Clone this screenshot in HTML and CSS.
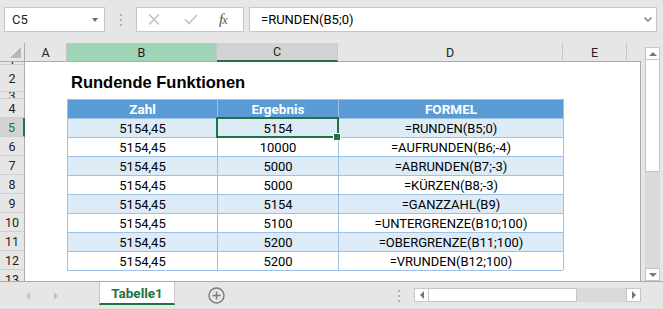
FILE: index.html
```html
<!DOCTYPE html>
<html lang="de">
<head>
    <meta charset="UTF-8">
    <meta name="viewport" content="width=device-width, initial-scale=1.0">
    <title>Rundende Funktionen</title>
    <link rel="stylesheet" href="styles.css">
</head>
<body>
    <div class="formula-bar">
        <div class="name-box">C5<span class="caret"></span></div>
        <div class="grip"><i></i><i></i><i></i></div>
        <div class="fx-buttons">
            <svg class="cancel" width="12" height="11" viewBox="0 0 12 11"><path d="M1 0.5 L11 10.5 M11 0.5 L1 10.5"/></svg>
            <svg class="enter" width="14" height="11" viewBox="0 0 14 11"><path d="M1 5.5 L5 9.5 L13 1"/></svg>
            <span class="fx">f<small>x</small></span>
        </div>
        <div class="formula-input">
            <span>=RUNDEN(B5;0)</span>
            <svg width="8" height="5" viewBox="0 0 8 5"><path d="M0.5 0.5 L4 4 L7.5 0.5"/></svg>
        </div>
    </div>

    <div class="sheet-area">
        <div class="sheet">
            <div class="row">
                <div class="corner"><span class="corner-tri"></span></div>
                <div class="ch">A</div>
                <div class="ch picked">B</div>
                <div class="ch active">C</div>
                <div class="ch">D</div>
                <div class="ch">E</div>
                <div class="ch blank"></div>
            </div>
            <div class="row">
                <div class="rh">1</div>
                <div class="c"></div><div class="c"></div><div class="c"></div><div class="c"></div><div class="c"></div>
                <div class="c edge"></div>
            </div>
            <div class="row">
                <div class="rh">2</div>
                <div class="c"></div>
                <div class="c title">Rundende Funktionen</div>
                <div class="c"></div><div class="c"></div><div class="c"></div>
                <div class="c edge"></div>
            </div>
            <div class="row">
                <div class="rh">3</div>
                <div class="c"></div><div class="c"></div><div class="c"></div><div class="c"></div><div class="c"></div>
                <div class="c edge"></div>
            </div>
            <div class="row thead">
                <div class="rh">4</div>
                <div class="c"></div>
                <div class="c t">Zahl</div>
                <div class="c t">Ergebnis</div>
                <div class="c t">FORMEL</div>
                <div class="c t-end"></div>
                <div class="c edge"></div>
            </div>
            <div class="row band">
                <div class="rh active">5</div>
                <div class="c"></div>
                <div class="c t">5154,45</div>
                <div class="c t selected">5154</div>
                <div class="c t">=RUNDEN(B5;0)</div>
                <div class="c t-end"></div>
                <div class="c edge"></div>
            </div>
            <div class="row">
                <div class="rh">6</div>
                <div class="c"></div>
                <div class="c t">5154,45</div>
                <div class="c t">10000</div>
                <div class="c t">=AUFRUNDEN(B6;-4)</div>
                <div class="c t-end"></div>
                <div class="c edge"></div>
            </div>
            <div class="row band">
                <div class="rh">7</div>
                <div class="c"></div>
                <div class="c t">5154,45</div>
                <div class="c t">5000</div>
                <div class="c t">=ABRUNDEN(B7;-3)</div>
                <div class="c t-end"></div>
                <div class="c edge"></div>
            </div>
            <div class="row">
                <div class="rh">8</div>
                <div class="c"></div>
                <div class="c t">5154,45</div>
                <div class="c t">5000</div>
                <div class="c t">=KÜRZEN(B8;-3)</div>
                <div class="c t-end"></div>
                <div class="c edge"></div>
            </div>
            <div class="row band">
                <div class="rh">9</div>
                <div class="c"></div>
                <div class="c t">5154,45</div>
                <div class="c t">5154</div>
                <div class="c t">=GANZZAHL(B9)</div>
                <div class="c t-end"></div>
                <div class="c edge"></div>
            </div>
            <div class="row">
                <div class="rh">10</div>
                <div class="c"></div>
                <div class="c t">5154,45</div>
                <div class="c t">5100</div>
                <div class="c t">=UNTERGRENZE(B10;100)</div>
                <div class="c t-end"></div>
                <div class="c edge"></div>
            </div>
            <div class="row band">
                <div class="rh">11</div>
                <div class="c"></div>
                <div class="c t">5154,45</div>
                <div class="c t">5200</div>
                <div class="c t">=OBERGRENZE(B11;100)</div>
                <div class="c t-end"></div>
                <div class="c edge"></div>
            </div>
            <div class="row">
                <div class="rh">12</div>
                <div class="c"></div>
                <div class="c t">5154,45</div>
                <div class="c t">5200</div>
                <div class="c t">=VRUNDEN(B12;100)</div>
                <div class="c t-end"></div>
                <div class="c edge"></div>
            </div>
            <div class="row">
                <div class="rh clipped">13</div>
                <div class="c"></div>
                <div class="c t-foot"></div><div class="c t-foot"></div><div class="c t-foot"></div>
                <div class="c"></div>
                <div class="c edge"></div>
            </div>
        </div>

        <div class="vscroll">
            <div class="sb-btn"><span class="tri up"></span></div>
            <div class="sb-thumb"></div>
            <div class="sb-track"></div>
            <div class="sb-btn"><span class="tri down"></span></div>
        </div>
    </div>

    <div class="tab-bar">
        <div class="tab-nav"><span class="tri left light"></span><span class="tri right light"></span></div>
        <div class="tab">Tabelle1</div>
        <svg class="add-sheet" width="17" height="17" viewBox="0 0 17 17">
            <circle cx="8.5" cy="8.5" r="7.5"/>
            <path d="M8.5 4.5 V12.5 M4.5 8.5 H12.5"/>
        </svg>
        <div class="grip tab-grip"><i></i><i></i><i></i></div>
        <div class="hscroll">
            <div class="sb-btn h"><span class="tri left"></span></div>
            <div class="sb-thumb h"></div>
            <div class="sb-track"></div>
            <div class="sb-btn h"><span class="tri right"></span></div>
        </div>
    </div>
</body>
</html>
```

FILE: styles.css
```css
* {
    margin: 0;
    padding: 0;
    box-sizing: border-box;
}

body {
    width: 663px;
    height: 310px;
    overflow: hidden;
    background: #e6e6e6;
    font-family: Roboto, "Liberation Sans", sans-serif;
    color: #000;
}

/* formula bar */

.formula-bar {
    height: 43px;
    display: flex;
    align-items: flex-start;
    padding: 7px 6px 0 4px;
}

.name-box {
    width: 101px;
    height: 25px;
    background: #fff;
    border: 1px solid #c6c6c6;
    display: flex;
    align-items: center;
    justify-content: space-between;
    padding: 0 6px 0 7px;
    font-size: 13px;
    color: #222;
}

.caret {
    border-left: 3px solid transparent;
    border-right: 3px solid transparent;
    border-top: 4px solid #6d6d6d;
}

.grip {
    display: flex;
    flex-direction: column;
    gap: 3px;
    margin: 7px 14px 0 15px;
}

.grip i {
    width: 2px;
    height: 2px;
    background: #b1b1b1;
}

.fx-buttons {
    width: 108px;
    height: 25px;
    background: #fff;
    border: 1px solid #c6c6c6;
    display: flex;
    align-items: center;
    padding-left: 11px;
}

.fx-buttons svg {
    fill: none;
    stroke: #bdbdbd;
    stroke-width: 1.4;
}

.fx-buttons .enter {
    margin-left: 24px;
}

.fx {
    margin-left: 21px;
    font-family: "Liberation Serif", serif;
    font-style: italic;
    font-size: 15px;
    color: #555;
    letter-spacing: -1px;
}

.fx small {
    font-size: 12px;
}

.formula-input {
    flex: 1;
    height: 25px;
    margin-left: 5px;
    background: #fff;
    border: 1px solid #c6c6c6;
    display: flex;
    align-items: center;
    justify-content: space-between;
    padding: 0 4px 0 11px;
    font-size: 13px;
}

.formula-input svg {
    fill: none;
    stroke: #777;
    stroke-width: 1.3;
}

/* sheet grid */

.sheet-area {
    display: flex;
    height: 238px;
}

.sheet {
    width: 641px;
    display: grid;
    grid-template-columns: 25px 42px 150px 121px 225px 64px 14px;
    grid-template-rows: 19px 3px 27px 7px repeat(9, 19px) 11px;
    background: #fff;
    font-size: 13px;
}

.row {
    display: contents;
}

.corner {
    background: #e6e6e6;
    border-right: 1px solid #ababab;
    border-bottom: 1px solid #ababab;
    display: flex;
    justify-content: flex-end;
    align-items: flex-end;
    padding: 0 3px 3px 0;
}

.corner-tri {
    border-left: 11px solid transparent;
    border-bottom: 11px solid #b7b7b7;
}

.ch {
    background: #e6e6e6;
    border-right: 1px solid #c6c6c6;
    border-bottom: 1px solid #ababab;
    display: flex;
    align-items: center;
    justify-content: center;
    font-size: 12.5px;
    color: #222;
}

.ch.picked {
    background: #9fd5b7;
    border-bottom-color: #8fbfa2;
}

.ch.active {
    background: #d2d2d2;
    border-bottom: 2px solid #217346;
}

.ch.blank {
    border-right: none;
}

.rh {
    background: #e6e6e6;
    border-right: 1px solid #ababab;
    border-bottom: 1px solid #d0d0d0;
    display: flex;
    align-items: center;
    justify-content: center;
    overflow: hidden;
    font-size: 12.5px;
    color: #222;
}

.rh.active {
    background: #d2d2d2;
    border-right: 2px solid #217346;
    color: #217346;
}

.rh.clipped {
    align-items: flex-start;
    line-height: 19px;
    border-bottom: none;
}

.c {
    display: flex;
    align-items: center;
    justify-content: center;
    white-space: nowrap;
}

.c.edge {
    border-right: 1px solid #ababab;
}

.c.title {
    justify-content: flex-start;
    align-items: flex-start;
    padding: 7px 0 0 4px;
    overflow: visible;
    font-family: "Liberation Sans", Arial, sans-serif;
    font-weight: bold;
    font-size: 16.5px;
    line-height: 20px;
}

.t {
    border-top: 1px solid #9bc2e6;
    border-left: 1px solid #9bc2e6;
}

.t-end {
    border-left: 1px solid #9bc2e6;
}

.t-foot {
    border-top: 1px solid #9bc2e6;
}

.thead .t {
    background: #5b9bd5;
    color: #fff;
    font-weight: bold;
    font-size: 13.5px;
}

.band .t {
    background: #ddebf7;
}

.selected {
    position: relative;
}

.selected::after {
    content: "";
    position: absolute;
    left: -2px;
    top: -2px;
    right: -1px;
    bottom: -1px;
    border: 2px solid #217346;
    z-index: 1;
}

.selected::before {
    content: "";
    position: absolute;
    right: -3px;
    bottom: -4px;
    width: 6px;
    height: 6px;
    background: #217346;
    border: 1px solid #fff;
    z-index: 2;
}

/* scroll bars */

.vscroll {
    width: 22px;
    padding: 4px 3px 0 4px;
    display: flex;
    flex-direction: column;
}

.sb-btn {
    height: 13px;
    background: #fff;
    border: 1px solid #c6c6c6;
    display: flex;
    align-items: center;
    justify-content: center;
}

.sb-thumb {
    height: 112px;
    background: #fff;
    border: 1px solid #c6c6c6;
    border-top: none;
}

.sb-track {
    flex: 1;
    background: #dadada;
}

.tri {
    width: 0;
    height: 0;
}

.tri.up {
    border-left: 4px solid transparent;
    border-right: 4px solid transparent;
    border-bottom: 4px solid #777;
}

.tri.down {
    border-left: 4px solid transparent;
    border-right: 4px solid transparent;
    border-top: 4px solid #777;
}

.tri.left {
    border-top: 4px solid transparent;
    border-bottom: 4px solid transparent;
    border-right: 4px solid #777;
}

.tri.right {
    border-top: 4px solid transparent;
    border-bottom: 4px solid transparent;
    border-left: 4px solid #777;
}

.tri.light {
    border-right-color: #c3c3c3;
    border-left-color: #c3c3c3;
}

/* sheet tabs */

.tab-bar {
    height: 29px;
    border-top: 1px solid #ababab;
    border-bottom: 1px solid #c9c9c9;
    display: flex;
    align-items: flex-start;
}

.tab-nav {
    width: 99px;
    height: 27px;
    display: flex;
    align-items: center;
    gap: 24px;
    padding-left: 26px;
}

.tab {
    width: 76px;
    height: 23px;
    background: #fff;
    border-left: 1px solid #c6c6c6;
    border-right: 1px solid #c6c6c6;
    border-bottom: 2px solid #217346;
    display: flex;
    align-items: center;
    justify-content: center;
    padding-top: 1px;
    font-weight: bold;
    font-size: 13.5px;
    color: #217346;
}

.add-sheet {
    margin: 5px 0 0 33px;
    fill: none;
    stroke: #7a7a7a;
    stroke-width: 1.4;
}

.tab-grip {
    margin: 8px 14px 0 173px;
}

.hscroll {
    width: 227px;
    height: 14px;
    margin-top: 6px;
    display: flex;
}

.sb-btn.h {
    width: 15px;
    height: 14px;
}

.sb-thumb.h {
    width: 148px;
    height: 14px;
    border-top: 1px solid #c6c6c6;
    border-left: none;
}
```
